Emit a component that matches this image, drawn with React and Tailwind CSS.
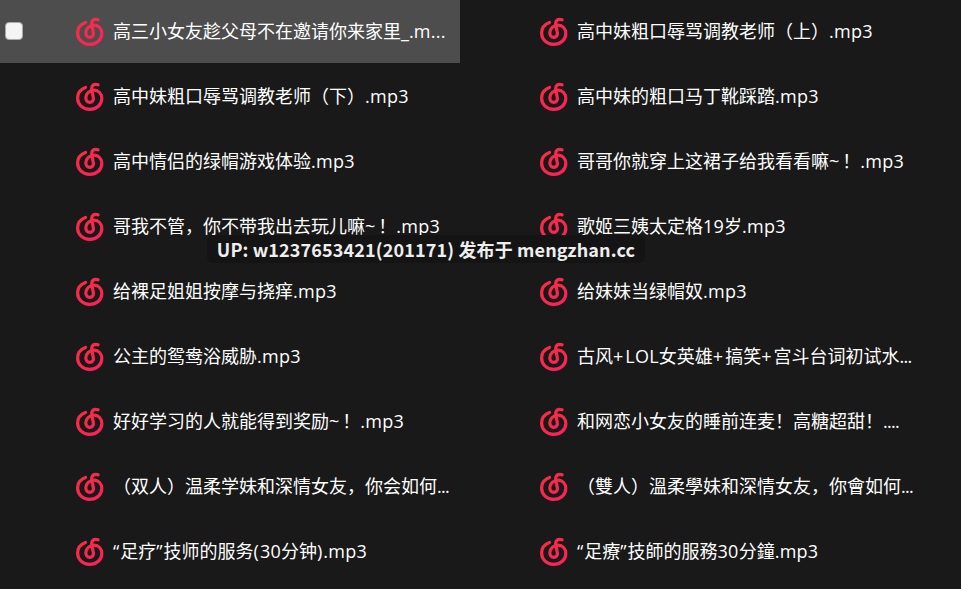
const items = [
  "高三小女友趁父母不在邀请你来家里_.m...",
  "高中妹粗口辱骂调教老师（上）.mp3",
  "高中妹粗口辱骂调教老师（下）.mp3",
  "高中妹的粗口马丁靴踩踏.mp3",
  "高中情侣的绿帽游戏体验.mp3",
  "哥哥你就穿上这裙子给我看看嘛~！.mp3",
  "哥我不管，你不带我出去玩儿嘛~！.mp3",
  "歌姬三姨太定格19岁.mp3",
  "给裸足姐姐按摩与挠痒.mp3",
  "给妹妹当绿帽奴.mp3",
  "公主的鸳鸯浴威胁.mp3",
  "古风+LOL女英雄+搞笑+宫斗台词初试水...",
  "好好学习的人就能得到奖励~！.mp3",
  "和网恋小女友的睡前连麦！高糖超甜！....",
  "（双人）温柔学妹和深情女友，你会如何...",
  "（雙人）溫柔學妹和深情女友，你會如何...",
  "“足疗”技师的服务(30分钟).mp3",
  "“足療”技師的服務30分鐘.mp3",
];

function spacing(run) {
  if (run === "~") return "tracking-[3px]";
  if (run === "+") return "tracking-[2px]";
  if (run === "(" || run === ")") return "tracking-[1px]";
  if (run === "”" || run === "“") return "tracking-[1px]";
  if (/^\.{3,}$/.test(run)) return "tracking-[-0.7px]";
  if (/^[0-9a-zA-Z.]+$/.test(run)) return "tracking-[0.25px]";
  return "";
}

function Label({ text }) {
  const runs = text.split(/(~|\+|\(|\)|“|”|\.{3,}|[0-9a-zA-Z.]+)/).filter(Boolean);
  return (
    <span className="ml-[9px] mt-[2px] whitespace-nowrap font-['Open_Sans','Noto_Sans_CJK_SC',sans-serif] leading-[24px]">
      {runs.map((r, i) => (
        <span key={i} className={spacing(r)}>
          {r}
        </span>
      ))}
    </span>
  );
}

function Logo() {
  return (
    <svg width="28" height="29" viewBox="0 0 28 29" fill="none" className="shrink-0">
      <defs>
        <linearGradient id="lg" x1="0" y1="0" x2="0.7" y2="1">
          <stop offset="0" stopColor="#f5303f" />
          <stop offset="1" stopColor="#fb2358" />
        </linearGradient>
      </defs>
      <path
        d="M9.5 5.4C4.6 7.2 1.6 11.2 1.6 16C1.6 22.6 6.9 27.4 13.6 27.4C20.6 27.4 25.8 22.6 25.8 16.4C25.8 11.6 22.4 8.2 18.2 8.2C13.6 8.2 9.8 11.6 9.8 15.8C9.8 18.6 11.6 20.4 13.8 20.4C16.2 20.4 17.8 18.4 17.3 15.8L15.8 7.2C15.2 3.8 18 1.2 22 2.8"
        stroke="url(#lg)"
        strokeWidth="3.2"
        strokeLinecap="round"
        strokeLinejoin="round"
      />
    </svg>
  );
}

export default function App() {
  return (
    <div className="relative h-[589px] w-[961px] overflow-hidden bg-[#191919] font-['Noto_Sans_CJK_SC','Noto_Sans',sans-serif] text-[18px] text-white">
      <div className="grid grid-cols-[464px_464px] gap-y-[2px]">
        {items.map((t, i) => (
          <div
            key={i}
            className={`relative flex h-[63px] w-[460px] items-start pl-[76px] pt-[17px] ${i === 0 ? "bg-[#4d4d4d]" : ""}`}
          >
            {i === 0 && (
              <div className="absolute left-[5px] top-[22px] h-[18px] w-[18px] rounded-[4px] border border-[#a8a8a8] bg-[#f4f4f4]" />
            )}
            <Logo />
            <Label text={t} />
          </div>
        ))}
      </div>
      <div className="absolute left-[207px] top-[235px] flex h-[28px] w-[438px] items-center justify-center rounded-[6px] bg-[#141414] font-bold tracking-[0.13px] text-[#eeeeee]">
        UP: w1237653421(201171) 发布于 mengzhan.cc
      </div>
    </div>
  );
}
